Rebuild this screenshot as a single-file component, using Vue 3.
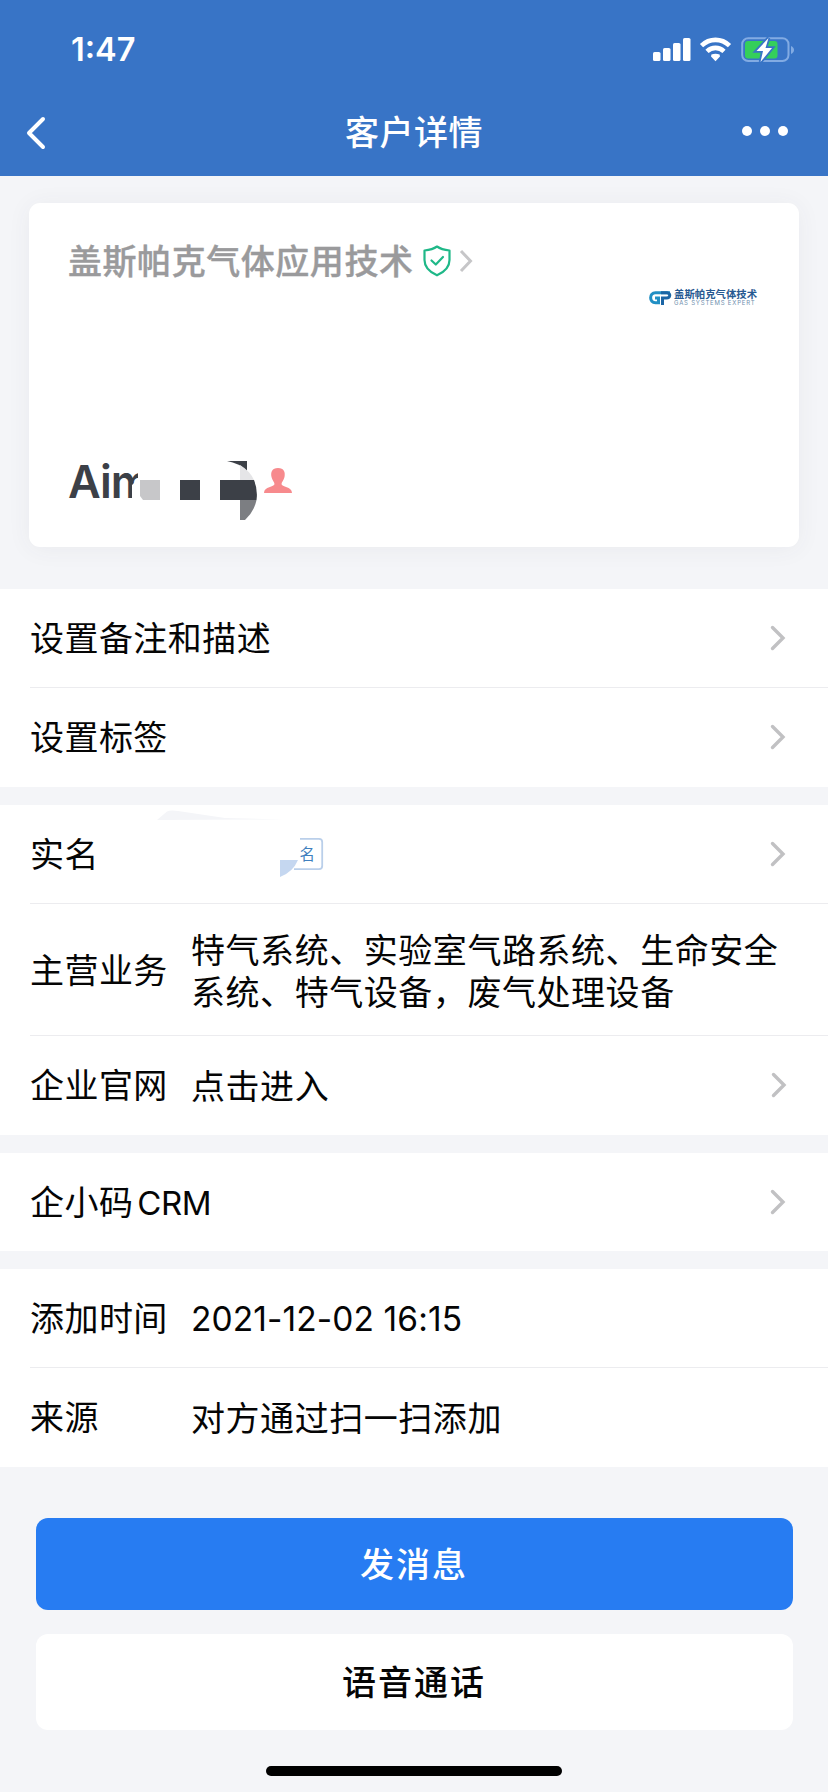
<script setup>
const groups = [
  [
    { label: '设置备注和描述', arrow: true },
    { label: '设置标签', arrow: true }
  ],
  [
    { label: '实名', arrow: true, badge: true },
    { label: '主营业务', value: '特气系统、实验室气路系统、生命安全系统、特气设备，废气处理设备', tall: true },
    { label: '企业官网', value: '点击进入', arrow: true }
  ],
  [{ label: '企小码', latin: 'CRM', arrow: true }],
  [
    { label: '添加时间', value: '2021-12-02 16:15', numeric: true },
    { label: '来源', value: '对方通过扫一扫添加' }
  ]
]
</script>

<template>
  <div class="page">
    <header class="top">
      <div class="status">
        <span class="time">1:47</span>
        <svg class="indicators" width="142" height="26" viewBox="0 0 142 26">
          <g fill="#fff">
            <rect x="0" y="15" width="7.5" height="9" rx="1.6" />
            <rect x="10" y="11" width="7.5" height="13" rx="1.6" />
            <rect x="20" y="6" width="7.5" height="18" rx="1.6" />
            <rect x="30" y="1" width="7.5" height="23" rx="1.6" />
            <path d="M58.400 17.600Q62.500 16 66.600 17.600L67 19.600L62.500 24.200L58 19.600Z" />
          </g>
          <g fill="none" stroke="#fff" stroke-width="4.600">
            <path d="M48.500 8.700Q54.500 2.900 62.500 2.900T76.500 8.700" />
            <path d="M54 14.400Q57.700 10.900 62.500 10.900T71 14.400" />
          </g>
          <rect x="89.200" y="1.200" width="46.300" height="22.800" rx="6" fill="none" stroke="#82abe3" stroke-width="2" />
          <path d="M138 9C142 10.500 142 15.500 138 17Z" fill="#82abe3" />
          <rect x="92" y="4" width="32.500" height="17.500" rx="3" fill="#34cf5b" />
          <path d="M115.500 1L103.500 14H110L107.500 25L119 11H112.500Z" fill="#fff" stroke="#3874c6" stroke-width="3.600" paint-order="stroke" />
        </svg>
      </div>
      <nav class="navbar">
        <svg width="20" height="34" viewBox="0 0 20 34"><path d="M17 3L3 17L17 31" fill="none" stroke="#fff" stroke-width="4" stroke-linecap="round" stroke-linejoin="round" /></svg>
        <h1>客户详情</h1>
        <svg width="46" height="12" viewBox="0 0 46 12" fill="#fff"><circle cx="5" cy="5" r="5" /><circle cx="23" cy="5" r="5" /><circle cx="41" cy="5" r="5" /></svg>
      </nav>
    </header>

    <section class="card">
      <div class="company">
        <span>盖斯帕克气体应用技术</span>
        <svg class="shield" width="28" height="32" viewBox="0 0 28 32" fill="none" stroke="#1fb888" stroke-width="2.200" stroke-linejoin="round" stroke-linecap="round">
          <path d="M14 1.500C10.500 4 6 5 1.500 5.500V15C1.500 22 6.500 27 14 30.300C21.500 27 26.500 22 26.500 15V5.500C22 5 17.500 4 14 1.500Z" />
          <path d="M8.500 15.500L12.800 19.500L20 12" />
        </svg>
        <svg class="small-arrow" width="14" height="24" viewBox="0 0 14 24"><path d="M2 2L11.500 12L2 22" fill="none" stroke="#c6c6c8" stroke-width="3" /></svg>
      </div>
      <div class="brand">
        <svg width="23" height="14" viewBox="0 0 23 14" fill="none" stroke-width="3">
          <path d="M21 1.700H6.500C0 1.700 0 11.800 6.500 11.800H9.500V7H6" stroke="#218fc4" />
          <path d="M13.500 14V7H17.500C21.500 7 22 2 18 1.800H12" stroke="#1b65a5" />
        </svg>
        <div class="brand-text"><b>盖斯帕克气体技术</b><i>GAS SYSTEMS EXPERT</i></div>
      </div>
      <div class="person">
        <span class="name">Aim</span>
        <svg width="154" height="62" viewBox="138 460 154 62">
          <path d="M140 480H160V500H143L140 496Z" fill="#c7c7c9" />
          <path d="M180 480H200V500H180Z" fill="#3c4047" />
          <path d="M227 461H247V471Q239 463 227 461Z" fill="#3c4047" />
          <path d="M240 465Q250 471 254 480H240Z" fill="#e5e5e7" />
          <path d="M220 480H254Q258 490 256.500 500H220Z" fill="#3c4047" />
          <path d="M240 500H256.500Q254 512 245 520H240Z" fill="#7c7e82" />
          <path d="M278 468C272 468 270.500 472 271.500 477C272 480 274.500 482 274.500 484C274.500 487 264 486.500 264 493H292C292 486.500 281.500 487 281.500 484C281.500 482 284 480 284.500 477C285.500 472 284 468 278 468Z" fill="#f78a8d" />
        </svg>
      </div>
    </section>

    <main class="groups">
      <section v-for="(rows, g) in groups" :key="g" class="group">
        <div v-for="row in rows" :key="row.label" class="row" :class="{ tall: row.tall }">
          <span class="label">{{ row.label }}<span v-if="row.latin" class="latin">{{ row.latin }}</span></span>
          <span v-if="row.value" class="value" :class="{ numeric: row.numeric }">{{ row.value }}</span>
          <svg v-if="row.badge" class="badge" width="174" height="98" viewBox="152 805 174 98">
            <path d="M157 820L167 811.500Q170 809.800 178 811L225 818L285 819.500Z" fill="#f4f5f8" />
            <path d="M280 860H298Q293 872 280 877Z" fill="#c5d7f0" />
            <path d="M300 838.800H319Q322.200 838.800 322.200 842V866Q322.200 869.200 319 869.200H294" fill="none" stroke="#bacfea" stroke-width="1.800" />
            <text x="299.500" y="860" font-size="15.500" fill="#3f7fbe">名</text>
          </svg>
          <svg v-if="row.arrow" class="arrow" width="16" height="26" viewBox="0 0 16 26"><path d="M2.500 2.500L13 13L2.500 23.500" fill="none" stroke="#c1c1c3" stroke-width="3.400" stroke-linecap="round" /></svg>
        </div>
      </section>
    </main>

    <footer class="actions">
      <button class="primary">发消息</button>
      <button class="secondary">语音通话</button>
      <div class="home-bar"></div>
    </footer>
  </div>
</template>

<style>
body { margin: 0; background: #f4f5f8; }
</style>

<style scoped>
.page {
  width: 828px;
  height: 1792px;
  overflow: hidden;
  background: #f4f5f8;
  color: #050505;
  font-family: Inter, "Noto Sans CJK SC", sans-serif;
  font-size: 34px;
  letter-spacing: 0.55px;
}
svg { display: block; flex: none; }
.top { height: 176px; background: #3874c6; color: #fff; }
.status { display: flex; justify-content: space-between; height: 88px; padding: 0 33px 0 71px; }
.time { padding-top: 30px; font-size: 32.5px; line-height: 40px; font-weight: 600; letter-spacing: 0; }
.indicators { margin-top: 37px; }
.navbar { display: flex; align-items: center; justify-content: space-between; height: 88px; padding: 0 40px 0 26px; }
.navbar h1 { margin: 0; padding: 0 0 3px 14px; font-family: "Noto Sans CJK SC", sans-serif; font-size: 34px; font-weight: 500; line-height: 50px; }
.navbar svg { width: 46px; }
.navbar svg:first-child { width: 20px; margin: 2px 26px 0 0; }
.card {
  box-sizing: border-box;
  display: flex;
  flex-direction: column;
  width: 770px;
  height: 344px;
  margin: 27px 29px 42px;
  padding: 33px 42px 25px 39px;
  border-radius: 11px;
  background: #fff;
  box-shadow: 0 2px 24px rgba(60, 60, 80, 0.06);
}
.company { display: flex; align-items: center; height: 50px; color: #9a9a9c; font-family: "Noto Sans CJK SC", sans-serif; font-weight: 500; }
.company span { padding-bottom: 3px; -webkit-text-stroke: 0.4px #9a9a9c; }
.shield { margin-left: 9px; }
.small-arrow { margin-left: 8px; }
.brand { display: flex; align-items: center; align-self: flex-end; gap: 2px; width: 108px; height: 16px; margin-top: 4px; letter-spacing: 0; }
.brand-text { display: flex; flex-direction: column; white-space: nowrap; color: #275991; }
.brand-text b { font-size: 10.4px; line-height: 10px; font-weight: 700; }
.brand-text i { color: #6f8fae; font-size: 6px; line-height: 6px; font-style: normal; letter-spacing: 0.8px; }
.person { display: flex; align-items: flex-start; margin-top: auto; }
.name {
  width: 70px;
  height: 62px;
  color: #3c4047;
  font-size: 45px;
  font-weight: 600;
  line-height: 44px;
  letter-spacing: -0.9px;
  clip-path: polygon(0 0, 100% 0, 100% 19px, 64px 25px, 64px 100%, 0 100%);
}
.groups { display: flex; flex-direction: column; gap: 18px; }
.group { background: #fff; }
.row { display: flex; align-items: center; box-sizing: border-box; height: 99px; margin-left: 30px; padding-right: 42px; border-bottom: 1px solid #ececef; }
.row:last-child { border-bottom-color: transparent; }
.group:nth-child(3) .row { height: 98px; }
.tall { height: 132px; padding-right: 0; }
.label { width: 160px; flex: none; padding-top: 2px; line-height: 50px; white-space: nowrap; letter-spacing: 0.45px; }
.latin { margin-left: 4px; font-size: 33px; letter-spacing: -0.5px; }
.value { flex: none; width: 592px; padding: 4px 0 0 1px; line-height: 42px; }
.numeric { padding-top: 2px; font-size: 33.5px; letter-spacing: 0.1px; }
.badge { margin-left: -38px; font-family: "Noto Sans CJK SC", sans-serif; letter-spacing: 0; }
.arrow { margin-left: auto; }
.value + .arrow { margin-left: -12px; }
.actions { display: flex; flex-direction: column; align-items: center; padding-top: 51px; }
button { width: 757px; padding: 0 0 4px; border: 0; border-radius: 12px; font-family: "Noto Sans CJK SC", sans-serif; font-size: 34px; font-weight: 500; letter-spacing: 2px; }
.primary { height: 92px; background: #277cf2; color: #fff; }
.secondary { height: 96px; margin-top: 24px; background: #fff; color: #050505; }
.home-bar { width: 296px; height: 10px; margin-top: 36px; border-radius: 5px; background: #000; }
</style>
